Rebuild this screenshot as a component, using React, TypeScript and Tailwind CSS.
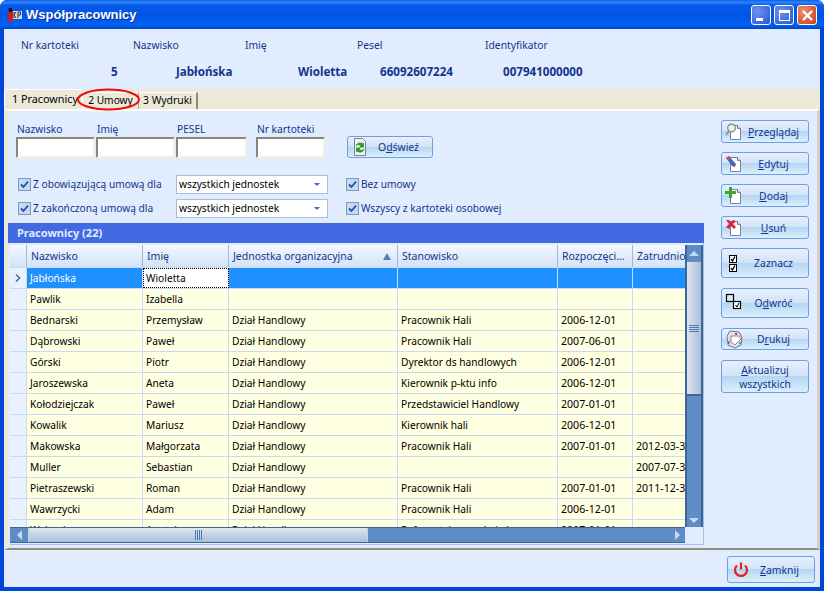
import React from "react";

const gloss = "bg-[linear-gradient(180deg,#e6f0fe_0%,#d3e3f8_48%,#b4d5f3_50%,#dceffb_100%)]";

type BtnProps = { w?: string; h: string; icon: React.ReactNode; children: React.ReactNode; cls?: string };
function Btn({ h, w = "w-[88px]", icon, children, cls = "" }: BtnProps) {
  return (
    <div className={`${w} ${h} ${gloss} relative flex items-center justify-center rounded-[3px] border border-[#6d9fe3] text-[10.4px] text-[#12358f] ${cls}`}>
      <span className="absolute left-[3px] top-1/2 -translate-y-1/2 flex">{icon}</span>
      <span className="text-center leading-[14px]">{children}</span>
    </div>
  );
}

const Page = ({ children }: { children?: React.ReactNode }) => (
  <svg width="18" height="18" viewBox="0 0 18 18">
    <path d="M5.5 2.5h7l3 3v11h-10z" fill="#fff" stroke="#7b7da8" />
    <path d="M12.5 2.5v3h3" fill="#dfe3f0" stroke="#7b7da8" />
    {children}
  </svg>
);

const IconView = () => (
  <Page>
    <circle cx="6.5" cy="5" r="3.8" fill="#eef3f0" stroke="#7e9a88" strokeWidth="1.4" />
    <path d="M4 8 L1 12" stroke="#8a9a90" strokeWidth="2" />
  </Page>
);
const IconEdit = () => (
  <Page>
    <path d="M1 3 L4 1 L11 9 L10 12 L7 11 Z" fill="#3a6fd0" />
    <path d="M1 3 L4 1 L6 3 L3 5 Z" fill="#d94a5a" />
    <path d="M7 9 L10 12 L9 7 Z" fill="#c03060" />
  </Page>
);
const IconAdd = () => (
  <Page>
    <path d="M4 0h3v4h4v3H7v4H4V7H0V4h4z" fill="#3ea52d" />
  </Page>
);
const IconDel = () => (
  <Page>
    <path d="M1 1l3 0 2 2 2-2 3 1-3 3 3 3-2 2-3-3-2 3-3-2 3-3z" fill="#d9263a" />
  </Page>
);
const IconCheckStack = () => (
  <svg width="14" height="22" viewBox="0 0 14 22">
    <rect x="4.5" y="3.5" width="7" height="7" fill="#fff" stroke="#000" />
    <path d="M6 7l1.5 2L10 4.5" fill="none" stroke="#000" strokeWidth="1.3" />
    <rect x="4.5" y="12.5" width="7" height="7" fill="#fff" stroke="#000" />
    <path d="M6 16l1.5 2L10 13.5" fill="none" stroke="#000" strokeWidth="1.3" />
  </svg>
);
const IconInvert = () => (
  <svg width="20" height="20" viewBox="0 0 20 20">
    <rect x="1.5" y="1.5" width="7" height="7" fill="none" stroke="#000" strokeWidth="1.2" />
    <rect x="8.5" y="8.5" width="7" height="7" fill="#fff" stroke="#000" strokeWidth="1.2" />
    <path d="M10.5 12l1.5 2 2-4" fill="none" stroke="#000" />
  </svg>
);
const IconPrint = () => (
  <svg width="20" height="20" viewBox="0 0 20 20">
    <path d="M5 2l9 1 3 5-1 8-6 3-7-3-1-9z" fill="#dfe2e6" stroke="#77787e" />
    <path d="M6 7l8 0 2 3-6 6-4-3z" fill="#fff" stroke="#8a8a90" />
    <rect x="10" y="4" width="2" height="2" fill="#e0304a" />
    <rect x="3" y="12" width="1.5" height="3" fill="#b03fb0" />
    <rect x="14" y="13" width="2" height="2" fill="#2fb8b0" />
  </svg>
);
const IconRefresh = () => (
  <svg width="18" height="20" viewBox="0 0 18 20">
    <path d="M3.5 1.5h8l3 3v14h-11z" fill="#f2f4f8" stroke="#7b7da8" />
    <path d="M4.5 9.5a4.6 4.6 0 0 1 7.5-3l1-1v5h-5l1.4-1.4a2.6 2.6 0 0 0-4.4.4z" fill="#2aa02c" />
    <path d="M13.5 11.5a4.6 4.6 0 0 1-7.5 3l-1 1v-5h5l-1.4 1.4a2.6 2.6 0 0 0 4.4-.4z" fill="#2aa02c" />
  </svg>
);
const IconPower = () => (
  <svg width="20" height="20" viewBox="0 0 20 20" fill="none">
    <path d="M6 5.5a6 6 0 1 0 8 0" stroke="#e3231c" strokeWidth="2.2" />
    <path d="M10 2.5v7" stroke="#e3231c" strokeWidth="2.2" />
  </svg>
);

function Check({ label, cls = "" }: { label: string; cls?: string }) {
  return (
    <div className={`flex items-center gap-[2px] text-[#15348a] ${cls}`}>
      <span className="flex h-[13px] w-[13px] items-center justify-center border border-[#7f9db9] bg-[#c6d8f2]">
        <svg width="9" height="9" viewBox="0 0 9 9" fill="none">
          <path d="M1 4.5l2.5 2.5L8 1.5" stroke="#1c4fb8" strokeWidth="1.8" />
        </svg>
      </span>
      <span>{label}</span>
    </div>
  );
}

function Select() {
  return (
    <div className="flex h-[19px] w-[152px] items-center justify-between border border-[#a5bedc] bg-white pl-[2px] pr-[7px] text-black">
      <span>wszystkich jednostek</span>
      <span className="h-0 w-0 border-x-[3px] border-t-[3px] border-x-transparent border-t-[#3d6db5]" />
    </div>
  );
}

function Field({ label, w, mr = "mr-px" }: { label: string; w: string; mr?: string }) {
  return (
    <div className={`${w} ${mr} flex flex-col`}>
      <span className="pl-px h-[15px] leading-[15px] text-[#15348a]">{label}</span>
      <div className="h-[21px] border-2 border-t-[#8b8778] border-l-[#8b8778] border-r-[#f1efe2] border-b-[#f1efe2] bg-white" />
    </div>
  );
}

const colW = ["w-[116px]", "w-[86px]", "w-[169px]", "w-[160px]", "w-[75px]", "w-[53px]"];
const heads = ["Nazwisko", "Imię", "Jednostka organizacyjna", "Stanowisko", "Rozpoczęci...", "Zatrudnion"];
const H = "Dział Handlowy";
const rows: string[][] = [
  ["Jabłońska", "Wioletta", "", "", "", ""],
  ["Pawlik", "Izabella", "", "", "", ""],
  ["Bednarski", "Przemysław", H, "Pracownik Hali", "2006-12-01", ""],
  ["Dąbrowski", "Paweł", H, "Pracownik Hali", "2007-06-01", ""],
  ["Górski", "Piotr", H, "Dyrektor ds handlowych", "2006-12-01", ""],
  ["Jaroszewska", "Aneta", H, "Kierownik p-ktu info", "2006-12-01", ""],
  ["Kołodziejczak", "Paweł", H, "Przedstawiciel Handlowy", "2007-01-01", ""],
  ["Kowalik", "Mariusz", H, "Kierownik hali", "2006-12-01", ""],
  ["Makowska", "Małgorzata", H, "Pracownik Hali", "2007-01-01", "2012-03-31"],
  ["Muller", "Sebastian", H, "", "", "2007-07-31"],
  ["Pietraszewski", "Roman", H, "Pracownik Hali", "2007-01-01", "2011-12-31"],
  ["Wawrzycki", "Adam", H, "Pracownik Hali", "2006-12-01", ""],
  ["Walczak", "Anatol", H, "Referent ds. zamówień", "2007-01-01", ""],
];

const Grip = ({ vertical }: { vertical?: boolean }) =>
  vertical ? (
    <div className="flex w-[10px] flex-col gap-px">
      <div className="h-px bg-[#4f78b8]" />
      <div className="h-px bg-[#4f78b8]" />
      <div className="h-px bg-[#4f78b8]" />
      <div className="h-px bg-[#4f78b8]" />
    </div>
  ) : (
    <div className="flex h-[10px] gap-px">
      <div className="w-px bg-[#4f78b8]" />
      <div className="w-px bg-[#4f78b8]" />
      <div className="w-px bg-[#4f78b8]" />
      <div className="w-px bg-[#4f78b8]" />
    </div>
  );

function Grid() {
  return (
    <div className="flex h-[302px] w-[694px] ml-[2px] flex-col border-r border-b border-[#a9bfdc] bg-[#e1ecff]">
      <div className="flex h-[284px] pt-[2px]">
        <div className="w-[675px] h-[282px] overflow-hidden bg-[#c8daf3]">
          <div className="flex h-[23px] border-b border-[#c8daf3]">
            <div className="w-[17px] shrink-0 border-r border-[#9db9dd] bg-[linear-gradient(180deg,#f4f8fe,#d3e2f7)]" />
            {heads.map((t, i) => (
              <div
                key={t}
                className={`${colW[i]} shrink-0 relative overflow-hidden whitespace-nowrap border-r border-[#9db9dd] bg-[linear-gradient(180deg,#f4f8fe,#d3e2f7)] pl-[4px] text-[10.5px] leading-[22px] text-[#15348a] last:border-r-0`}
              >
                {t}
                {i === 2 && (
                  <span className="absolute right-[6px] top-[8px] h-0 w-0 border-x-[4px] border-b-[7px] border-x-transparent border-b-[#5b7fb5]" />
                )}
              </div>
            ))}
          </div>
          {rows.map((r, ri) => (
            <div key={ri} className="flex h-[21px] border-b border-[#c8daf3]">
              <div className="flex w-[17px] shrink-0 items-center justify-center border-r border-[#c8daf3] bg-[#e9f1fd]">
                {ri === 0 && (
                  <svg width="6" height="8" viewBox="0 0 6 8" fill="none">
                    <path d="M1 0.5L4.5 4L1 7.5" stroke="#4b6ea8" strokeWidth="1.6" />
                  </svg>
                )}
              </div>
              {r.map((c, ci) => {
                const sel = ri === 0;
                const focus = sel && ci === 1;
                return (
                  <div
                    key={ci}
                    className={`${colW[ci]} shrink-0 overflow-hidden whitespace-nowrap pl-[3px] leading-[20px] border-r border-[#c8daf3] last:border-r-0 ${
                      ci >= 4 ? "text-[10.6px]" : ""
                    } ${
                      focus
                        ? "bg-white text-black outline-1 outline-dotted outline-black -outline-offset-1"
                        : sel
                          ? "bg-[#1e90ff] text-white"
                          : "bg-[#ffffe1] text-black"
                    }`}
                  >
                    {c}
                  </div>
                );
              })}
            </div>
          ))}
        </div>
        <div className="flex w-[18px] flex-col border-x-2 border-[#3f6497] bg-[#5f8cc7]">
          <div className="flex h-[17px] shrink-0 items-center justify-center">
            <span className="h-0 w-0 border-x-[5px] border-b-[5px] border-x-transparent border-b-[#c8d9ef]" />
          </div>
          <div className="flex h-[134px] items-center justify-center border-b-2 border-[#3f6497] bg-[linear-gradient(90deg,#dfe6f0,#c5d2e3_50%,#a9c0db)]">
            <Grip vertical />
          </div>
          <div className="flex-1" />
          <div className="flex h-[12px] shrink-0 items-center justify-center pb-[2px]">
            <span className="h-0 w-0 border-x-[5px] border-t-[5px] border-x-transparent border-t-[#c8d9ef]" />
          </div>
        </div>
      </div>
      <div className="flex h-[16px] w-[675px] border-y border-[#3f6497] bg-[#5f8cc7]">
        <div className="flex w-[18px] shrink-0 items-center justify-center">
          <span className="h-0 w-0 border-y-[5px] border-r-[5px] border-y-transparent border-r-[#c8d9ef]" />
        </div>
        <div className="flex w-[340px] items-center justify-center border-x border-[#c5d2e3] bg-[linear-gradient(180deg,#dfe6f0,#c5d2e3_50%,#a9c0db)]">
          <Grip />
        </div>
        <div className="flex-1" />
        <div className="flex w-[16px] shrink-0 items-center justify-center">
          <span className="h-0 w-0 border-y-[5px] border-l-[5px] border-y-transparent border-l-[#c8d9ef]" />
        </div>
      </div>
    </div>
  );
}

export default function App() {
  const u = (s: string) => <span className="underline">{s}</span>;
  return (
    <div className="relative flex h-[591px] w-[824px] flex-col overflow-hidden rounded-t-[7px] bg-[#0046d8] text-[10.2px] font-['Noto_Sans','DejaVu_Sans',sans-serif]">
      {/* title bar */}
      <div className="flex h-[29px] shrink-0 items-center bg-[linear-gradient(180deg,#0a5ee8_0%,#2f86f8_8%,#0759ea_18%,#0055e5_55%,#0062f6_85%,#0048c8_100%)] pl-[7px] pr-[7px] pt-px">
        <svg width="16" height="16" viewBox="0 0 16 16">
          <circle cx="3.5" cy="3" r="2" fill="#111" />
          <rect x="1" y="5" width="5" height="10" fill="#c81e1e" />
          <rect x="6" y="4" width="9" height="8" fill="#d8d8e0" />
          <path d="M7 5v6M7 8l2-3M7 8l2 3M11 11V5h2.5v3H11" stroke="#333" fill="none" />
        </svg>
        <span className="ml-[3px] text-[13px] font-bold text-white [text-shadow:1px_1px_0_#0b2f9a] font-['Liberation_Sans',sans-serif]">
          Współpracownicy
        </span>
        <div className="ml-auto flex gap-[3px]">
          <div className="relative h-[20px] w-[20px] rounded-[3px] border border-white bg-[radial-gradient(circle_at_30%_30%,#6a94ee,#2a55d8)]">
            <div className="absolute left-[4px] top-[12px] h-[3px] w-[7px] bg-white" />
          </div>
          <div className="flex h-[20px] w-[20px] items-center justify-center rounded-[3px] border border-white bg-[radial-gradient(circle_at_30%_30%,#6a94ee,#2a55d8)]">
            <div className="h-[11px] w-[11px] border border-t-[3px] border-white" />
          </div>
          <div className="flex h-[20px] w-[20px] items-center justify-center rounded-[3px] border border-white bg-[radial-gradient(circle_at_30%_30%,#ef9070,#c93a12)]">
            <svg width="13" height="13" viewBox="0 0 13 13">
              <path d="M2 2l9 9M11 2l-9 9" stroke="#fff" strokeWidth="2.4" />
            </svg>
          </div>
        </div>
      </div>

      {/* client area */}
      <div className="mx-[4px] mb-[4px] flex flex-1 flex-col bg-[#e1ecff]">
        {/* header */}
        <div className="h-[60px] shrink-0 pt-[9px]">
          <div className="flex h-[16px] items-center pl-[17px] text-[10.3px] text-[#15348a]">
            <span className="w-[112px]">Nr kartoteki</span>
            <span className="w-[112px]">Nazwisko</span>
            <span className="w-[112px]">Imię</span>
            <span className="w-[128px]">Pesel</span>
            <span>Identyfikator</span>
          </div>
          <div className="mt-[10px] flex h-[16px] items-center text-[11.6px] font-bold text-[#15348a]">
            <span className="ml-[107px] w-[65px]">5</span>
            <span className="w-[122px]">Jabłońska</span>
            <span className="w-[82px]">Wioletta</span>
            <span className="w-[123px]">66092607224</span>
            <span>007941000000</span>
          </div>
        </div>

        {/* tabs */}
        <div className="flex h-[20px] shrink-0 items-end bg-[#ece9d8] text-black">
          <div className="flex h-[20px] w-[78px] items-center rounded-t-[2px] border-t border-l border-white bg-[#ece9d8] pl-[7px] text-[10.8px] whitespace-nowrap">
            1 Pracownicy
          </div>
          <div className="flex h-[17px] w-[57px] items-center justify-center border-t border-l border-white bg-[#ece9d8] border-r border-r-[#aca899]">
            2 Umowy
          </div>
          <div className="flex h-[17px] w-[59px] items-center justify-center border-t border-white bg-[#ece9d8] border-r-2 border-r-[#8f8c7c] text-[10.4px]">
            3 Wydruki
          </div>
        </div>

        {/* panel */}
        <div className="flex h-[441px] shrink-0 border-y-[2px] border-t-[#fdfcf6] border-b-[#918e7f] border-l-[4px] border-l-[#ece9d8] border-r-[3px] border-r-[#d6d2c2] bg-[#e1ecff]">
          <div className="w-[709px] shrink-0">
            <div className="flex h-[112px] flex-col">
              <div className="flex pl-[8px] pt-[11px]">
                <Field label="Nazwisko" w="w-[79px]" />
                <Field label="Imię" w="w-[79px]" />
                <Field label="PESEL" w="w-[71px]" mr="mr-[9px]" />
                <Field label="Nr kartoteki" w="w-[69px]" />
                <div className="ml-[21px] mt-[14px]">
                  <Btn h="h-[22px]" w="w-[86px]" icon={<IconRefresh />}>
                    <span className="pl-[17px]">O{u("d")}świeź</span>
                  </Btn>
                </div>
              </div>
              <div className="mt-[17px] flex items-center pl-[10px]">
                <Check label="Z obowiązującą umową dla" cls="w-[158px]" />
                <Select />
                <Check label="Bez umowy" cls="ml-[18px]" />
              </div>
              <div className="mt-[5px] flex items-center pl-[10px]">
                <Check label="Z zakończoną umową dla" cls="w-[158px]" />
                <Select />
                <Check label="Wszyscy z kartoteki osobowej" cls="ml-[18px]" />
              </div>
            </div>
            <div className="h-[20px] w-[696px] bg-[#4169e1] pl-[9px] text-[11px] font-bold leading-[19px] text-[#e1ecff]">
              Pracownicy (22)
            </div>
            <Grid />
          </div>
          <div className="flex flex-1 flex-col pt-[9px] pl-[4px]">
            <Btn h="h-[23px]" icon={<IconView />} cls="mb-[9px]">
              <span className="pl-[17px]">{u("P")}rzeglądaj</span>
            </Btn>
            <Btn h="h-[23px]" icon={<IconEdit />} cls="mb-[9px]">
              <span className="pl-[17px]">{u("E")}dytuj</span>
            </Btn>
            <Btn h="h-[23px]" icon={<IconAdd />} cls="mb-[9px]">
              <span className="pl-[17px]">{u("D")}odaj</span>
            </Btn>
            <Btn h="h-[23px]" icon={<IconDel />} cls="mb-[9px]">
              <span className="pl-[17px]">{u("U")}suń</span>
            </Btn>
            <Btn h="h-[30px]" icon={<IconCheckStack />} cls="mb-[10px]">
              <span className="pl-[17px]">Zaznacz</span>
            </Btn>
            <Btn h="h-[30px]" icon={<IconInvert />} cls="mb-[10px]">
              <span className="pl-[17px]">O{u("d")}wróć</span>
            </Btn>
            <Btn h="h-[22px]" icon={<IconPrint />} cls="mb-[10px]">
              <span className="pl-[17px]">D{u("r")}ukuj</span>
            </Btn>
            <Btn h="h-[33px]" icon={null}>
              {u("A")}ktualizuj
              <br />
              wszystkich
            </Btn>
          </div>
        </div>

        {/* footer */}
        <div className="flex flex-1 items-start justify-end pr-[5px] pt-[6px]">
          <Btn h="h-[27px]" icon={<IconPower />}>
            <span className="pl-[17px]">{u("Z")}amknij</span>
          </Btn>
        </div>
      </div>

      {/* red hand-drawn mark */}
      <svg className="absolute left-[76px] top-[87px]" width="65" height="25" viewBox="0 0 65 25" fill="none">
        <ellipse cx="32.5" cy="12.5" rx="30.5" ry="10" stroke="#ee0a0a" strokeWidth="2" />
      </svg>
    </div>
  );
}
